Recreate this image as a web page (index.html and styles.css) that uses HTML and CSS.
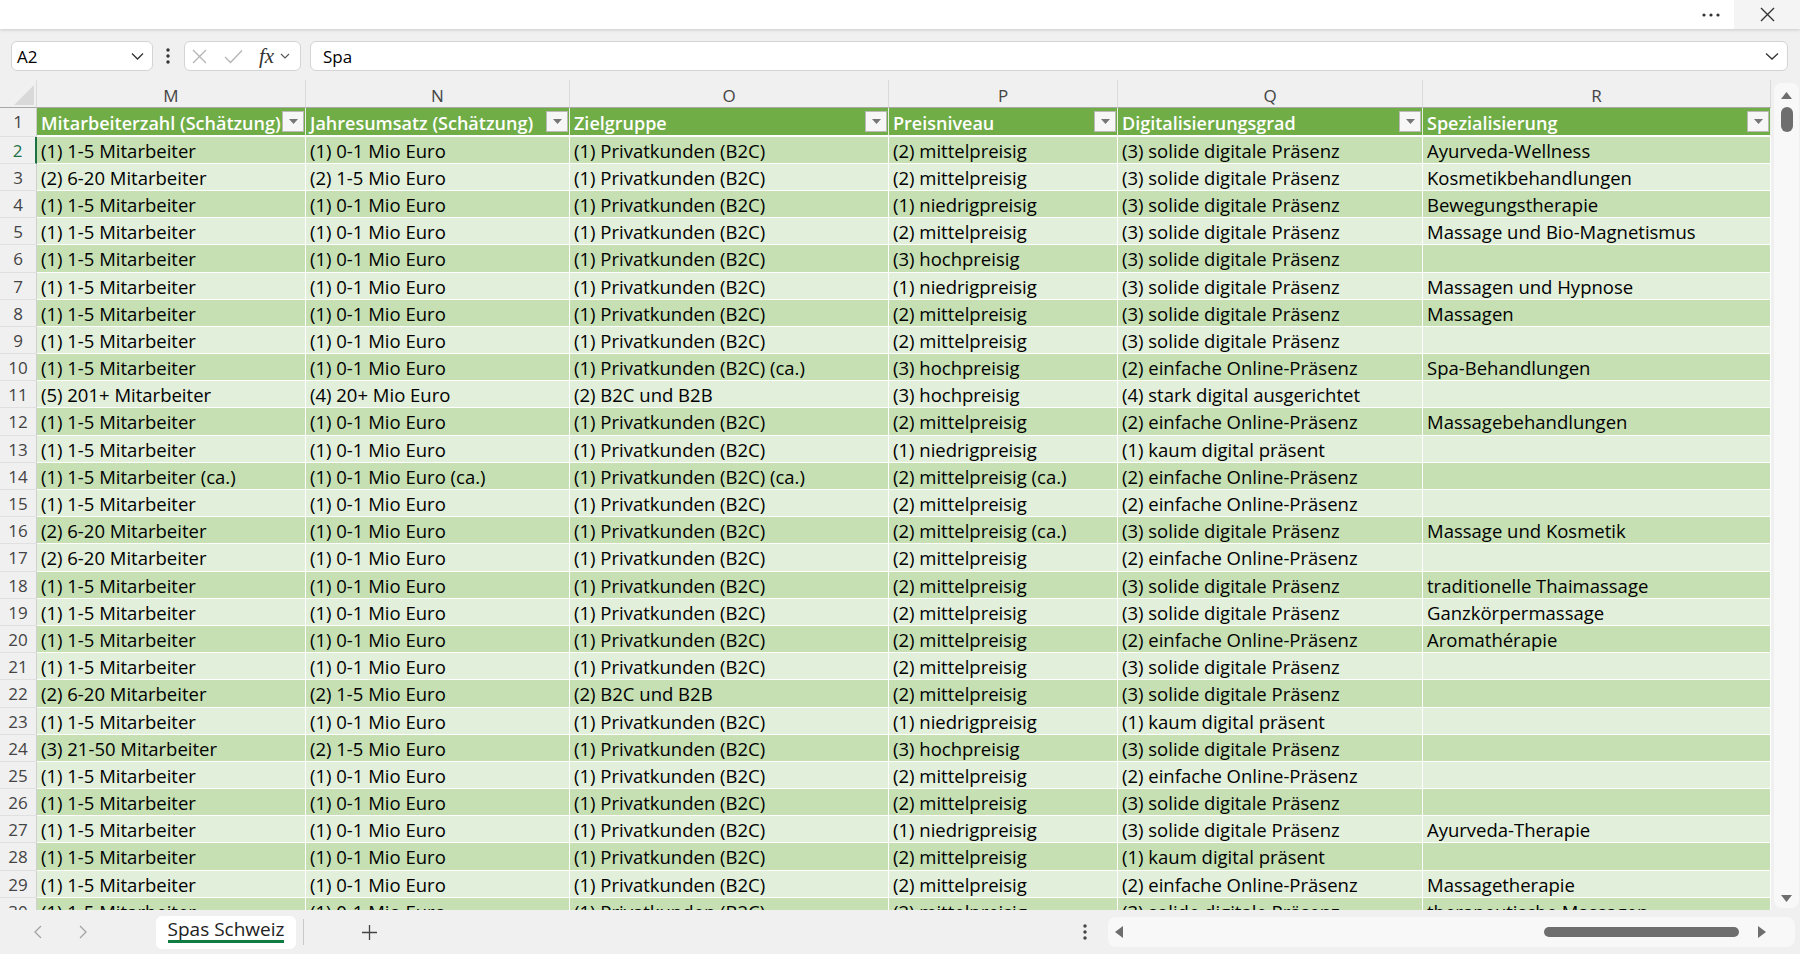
FILE: index.html
```html
<!DOCTYPE html>
<html lang="de">
<head>
    <meta charset="UTF-8">
    <meta name="viewport" content="width=device-width, initial-scale=1.0">
    <title>Spas Schweiz</title>
    <link rel="stylesheet" href="styles.css">
</head>
<body>
    <div class="titlebar">
        <div class="title-more">
            <svg width="18" height="4" viewBox="0 0 18 4"><circle cx="2" cy="2" r="1.6" fill="#333"/><circle cx="9" cy="2" r="1.6" fill="#333"/><circle cx="16" cy="2" r="1.6" fill="#333"/></svg>
        </div>
        <div class="title-close">
            <svg width="15" height="15" viewBox="0 0 15 15"><path d="M1 1l13 13M14 1L1 14" stroke="#333" stroke-width="1.4" fill="none"/></svg>
        </div>
    </div>

    <div class="formula-bar">
        <div class="name-box">
            <span>A2</span>
            <svg width="13" height="8" viewBox="0 0 13 8"><path d="M1 1.5l5.5 5.5 5.5-5.5" stroke="#333" stroke-width="1.3" fill="none"/></svg>
        </div>
        <div class="fb-sep">
            <svg width="4" height="16" viewBox="0 0 4 16"><circle cx="2" cy="2" r="1.7" fill="#333"/><circle cx="2" cy="8" r="1.7" fill="#333"/><circle cx="2" cy="14" r="1.7" fill="#333"/></svg>
        </div>
        <div class="fx-box">
            <svg class="fx-cancel" width="15" height="15" viewBox="0 0 15 15"><path d="M1 1l13 13M14 1L1 14" stroke="#b4b4b4" stroke-width="1.3" fill="none"/></svg>
            <svg class="fx-enter" width="19" height="15" viewBox="0 0 19 15"><path d="M1 8l5.5 5.5L18 1.5" stroke="#b4b4b4" stroke-width="1.3" fill="none"/></svg>
            <span class="fx-label">fx</span>
            <svg class="fx-more" width="10" height="6" viewBox="0 0 10 6"><path d="M1 1l4 4 4-4" stroke="#555" stroke-width="1.1" fill="none"/></svg>
        </div>
        <div class="formula-input">
            <span>Spa</span>
            <svg width="14" height="8" viewBox="0 0 14 8"><path d="M1 1.5l6 5.5 6-5.5" stroke="#333" stroke-width="1.3" fill="none"/></svg>
        </div>
    </div>

    <div class="sheet">
        <div class="grid" id="grid">
            <div class="corner">
                <svg width="20" height="20" viewBox="0 0 20 20"><path d="M20 0V20H0Z" fill="#d9d9d9"/></svg>
            </div>
            <div class="col-head">M</div>
            <div class="col-head">N</div>
            <div class="col-head">O</div>
            <div class="col-head">P</div>
            <div class="col-head">Q</div>
            <div class="col-head">R</div>

            <div class="row-head">1</div>
            <div class="hcell"><span class="htext">Mitarbeiterzahl (Schätzung)</span><span class="filter"><svg width="9" height="5" viewBox="0 0 9 5"><path d="M0 0h9L4.5 5z" fill="#767676"/></svg></span></div>
            <div class="hcell"><span class="htext">Jahresumsatz (Schätzung)</span><span class="filter"><svg width="9" height="5" viewBox="0 0 9 5"><path d="M0 0h9L4.5 5z" fill="#767676"/></svg></span></div>
            <div class="hcell"><span class="htext">Zielgruppe</span><span class="filter"><svg width="9" height="5" viewBox="0 0 9 5"><path d="M0 0h9L4.5 5z" fill="#767676"/></svg></span></div>
            <div class="hcell"><span class="htext">Preisniveau</span><span class="filter"><svg width="9" height="5" viewBox="0 0 9 5"><path d="M0 0h9L4.5 5z" fill="#767676"/></svg></span></div>
            <div class="hcell"><span class="htext">Digitalisierungsgrad</span><span class="filter"><svg width="9" height="5" viewBox="0 0 9 5"><path d="M0 0h9L4.5 5z" fill="#767676"/></svg></span></div>
            <div class="hcell"><span class="htext">Spezialisierung</span><span class="filter"><svg width="9" height="5" viewBox="0 0 9 5"><path d="M0 0h9L4.5 5z" fill="#767676"/></svg></span></div>
        </div>

        <div class="vscroll">
            <div class="vtrack">
                <svg class="arrow-up" width="11" height="7" viewBox="0 0 11 7"><path d="M0 7L5.5 0 11 7z" fill="#6e6e6e"/></svg>
                <div class="vthumb"></div>
                <div class="vspace"></div>
                <svg class="arrow-down" width="11" height="7" viewBox="0 0 11 7"><path d="M0 0h11L5.5 7z" fill="#6e6e6e"/></svg>
            </div>
        </div>
    </div>

    <div class="tabbar">
        <div class="tab-nav">
            <svg width="8" height="14" viewBox="0 0 8 14"><path d="M7 1L1 7l6 6" stroke="#a3a3a3" stroke-width="1.3" fill="none"/></svg>
        </div>
        <div class="tab-nav">
            <svg width="8" height="14" viewBox="0 0 8 14"><path d="M1 1l6 6-6 6" stroke="#a3a3a3" stroke-width="1.3" fill="none"/></svg>
        </div>
        <div class="tab"><span class="tab-label">Spas Schweiz</span></div>
        <div class="tab-sep"></div>
        <div class="tab-add">
            <svg width="17" height="17" viewBox="0 0 17 17"><path d="M8.5 1v15M1 8.5h15" stroke="#444" stroke-width="1.3" fill="none"/></svg>
        </div>
        <div class="tab-space"></div>
        <div class="tab-more">
            <svg width="4" height="16" viewBox="0 0 4 16"><circle cx="2" cy="2" r="1.7" fill="#444"/><circle cx="2" cy="8" r="1.7" fill="#444"/><circle cx="2" cy="14" r="1.7" fill="#444"/></svg>
        </div>
        <div class="hscroll">
            <svg width="8" height="12" viewBox="0 0 8 12"><path d="M8 0v12L0 6z" fill="#6e6e6e"/></svg>
            <div class="hlane"><div class="hthumb"></div></div>
            <svg width="8" height="12" viewBox="0 0 8 12"><path d="M0 0v12l8-6z" fill="#6e6e6e"/></svg>
        </div>
    </div>

    <script>
        const MA = '(1) 1-5 Mitarbeiter';
        const MB = '(2) 6-20 Mitarbeiter';
        const UA = '(1) 0-1 Mio Euro';
        const UB = '(2) 1-5 Mio Euro';
        const PK = '(1) Privatkunden (B2C)';
        const BB = '(2) B2C und B2B';
        const NP = '(1) niedrigpreisig';
        const MP = '(2) mittelpreisig';
        const HP = '(3) hochpreisig';
        const KD = '(1) kaum digital präsent';
        const EO = '(2) einfache Online-Präsenz';
        const SD = '(3) solide digitale Präsenz';

        // rows 2..30 of the table, columns M..R
        const rows = [
            [MA, UA, PK, MP, SD, 'Ayurveda-Wellness'],
            [MB, UB, PK, MP, SD, 'Kosmetikbehandlungen'],
            [MA, UA, PK, NP, SD, 'Bewegungstherapie'],
            [MA, UA, PK, MP, SD, 'Massage und Bio-Magnetismus'],
            [MA, UA, PK, HP, SD, ''],
            [MA, UA, PK, NP, SD, 'Massagen und Hypnose'],
            [MA, UA, PK, MP, SD, 'Massagen'],
            [MA, UA, PK, MP, SD, ''],
            [MA, UA, '(1) Privatkunden (B2C) (ca.)', HP, EO, 'Spa-Behandlungen'],
            ['(5) 201+ Mitarbeiter', '(4) 20+ Mio Euro', BB, HP, '(4) stark digital ausgerichtet', ''],
            [MA, UA, PK, MP, EO, 'Massagebehandlungen'],
            [MA, UA, PK, NP, KD, ''],
            ['(1) 1-5 Mitarbeiter (ca.)', '(1) 0-1 Mio Euro (ca.)', '(1) Privatkunden (B2C) (ca.)', '(2) mittelpreisig (ca.)', EO, ''],
            [MA, UA, PK, MP, EO, ''],
            [MB, UA, PK, '(2) mittelpreisig (ca.)', SD, 'Massage und Kosmetik'],
            [MB, UA, PK, MP, EO, ''],
            [MA, UA, PK, MP, SD, 'traditionelle Thaimassage'],
            [MA, UA, PK, MP, SD, 'Ganzkörpermassage'],
            [MA, UA, PK, MP, EO, 'Aromathérapie'],
            [MA, UA, PK, MP, SD, ''],
            [MB, UB, BB, MP, SD, ''],
            [MA, UA, PK, NP, KD, ''],
            ['(3) 21-50 Mitarbeiter', UB, PK, HP, SD, ''],
            [MA, UA, PK, MP, EO, ''],
            [MA, UA, PK, MP, SD, ''],
            [MA, UA, PK, NP, SD, 'Ayurveda-Therapie'],
            [MA, UA, PK, MP, KD, ''],
            [MA, UA, PK, MP, EO, 'Massagetherapie'],
            [MA, UA, PK, MP, SD, 'therapeutische Massagen']
        ];

        const grid = document.getElementById('grid');
        rows.forEach((row, i) => {
            const n = i + 2;
            const head = document.createElement('div');
            head.className = n === 2 ? 'row-head active' : 'row-head';
            head.textContent = n;
            grid.appendChild(head);
            row.forEach(value => {
                const cell = document.createElement('div');
                cell.className = 'cell ' + (n % 2 === 0 ? 'dark' : 'light');
                cell.textContent = value;
                grid.appendChild(cell);
            });
        });
    </script>
</body>
</html>
```

FILE: styles.css
```css
* {
    box-sizing: border-box;
}
html, body {
    margin: 0;
}
body {
    width: 1800px;
    height: 954px;
    overflow: hidden;
    display: flex;
    flex-direction: column;
    font-family: 'Open Sans', 'Noto Sans', sans-serif;
    background-color: #f0f0f0;
    color: #000;
}

/* window title bar */
.titlebar {
    flex-shrink: 0;
    height: 29px;
    display: flex;
    justify-content: flex-end;
    background-color: #fff;
    box-shadow: 0 1px 3px rgba(0, 0, 0, 0.16);
    position: relative;
    z-index: 1;
}
.title-more {
    width: 46px;
    display: flex;
    align-items: center;
    justify-content: center;
}
.title-close {
    width: 66px;
    display: flex;
    align-items: center;
    justify-content: center;
    background-color: #f4f4f4;
}

/* name box + formula bar */
.formula-bar {
    flex-shrink: 0;
    height: 51px;
    display: flex;
    align-items: flex-start;
    padding: 12px 12px 0 11px;
}
.name-box,
.fx-box,
.formula-input {
    height: 30px;
    display: flex;
    align-items: center;
    background-color: #fff;
    border: 1px solid #d4d4d4;
    border-radius: 6px;
    font-size: 17px;
}
.name-box {
    width: 142px;
    justify-content: space-between;
    padding: 0 8px 0 5px;
}
.fb-sep {
    width: 8px;
    height: 30px;
    margin: 0 12px 0 11px;
    display: flex;
    align-items: center;
    justify-content: center;
}
.fx-box {
    width: 117px;
}
.fx-cancel {
    margin-left: 7px;
}
.fx-enter {
    margin-left: 17px;
}
.fx-label {
    margin-left: 16px;
    font-family: 'Liberation Serif', 'DejaVu Serif', serif;
    font-style: italic;
    font-size: 21px;
    color: #333;
    line-height: 1;
}
.fx-more {
    margin-left: 6px;
}
.formula-input {
    flex: 1;
    margin-left: 9px;
    justify-content: space-between;
    padding: 0 8px 0 12px;
}

/* grid */
.sheet {
    flex-shrink: 0;
    height: 830px;
    display: flex;
}
.grid {
    width: 1771px;
    height: 830px;
    overflow: hidden;
    display: grid;
    grid-template-columns: 37px 269px 264px 319px 229px 305px 348px;
    grid-template-rows: 28px 28.6px;
    grid-auto-rows: 27.2px;
    align-content: start;
}
.corner {
    display: flex;
    justify-content: flex-end;
    align-items: flex-end;
    padding: 0 2px 2px 0;
    background-color: #f0f0f0;
    border-right: 1px solid #dadada;
    border-bottom: 1px solid #a8a8a8;
}
.col-head {
    background-color: #f0f0f0;
    border-right: 1px solid #dadada;
    border-bottom: 1px solid #a8a8a8;
    text-align: center;
    font-size: 17px;
    line-height: 25px;
    padding-top: 3px;
    color: #444;
}
.row-head {
    background-color: #f0f0f0;
    border-right: 1px solid #cfcfcf;
    border-bottom: 1px solid #e0e0e0;
    text-align: center;
    font-size: 17px;
    line-height: 26px;
    padding-top: 1px;
    color: #444;
}
.row-head.active {
    color: #1e7145;
    border-right: 2px solid #1e7145;
}
.hcell {
    display: flex;
    align-items: center;
    justify-content: space-between;
    padding: 0 1px 0 4px;
    background-color: #70ad47;
    border-right: 1px solid #e9f2e2;
    border-bottom: 2px solid #fff;
    color: #fff;
    font-weight: 600;
    font-size: 18px;
    line-height: 27px;
    white-space: nowrap;
    overflow: hidden;
}
.htext {
    margin-top: 4px;
}
.filter {
    flex-shrink: 0;
    width: 22px;
    height: 21px;
    display: flex;
    align-items: center;
    justify-content: center;
    background-color: #f6f6f6;
    border: 1px solid #b9b9b9;
}
.cell {
    padding-left: 4px;
    border-right: 1px solid #fff;
    border-bottom: 1px solid #fff;
    font-size: 18.5px;
    line-height: 27px;
    white-space: nowrap;
    overflow: hidden;
}
.dark {
    background-color: #c6e0b4;
}
.light {
    background-color: #e2efda;
}

/* vertical scrollbar */
.vscroll {
    width: 29px;
    padding: 3px 1px 2px 3px;
}
.vtrack {
    height: 100%;
    display: flex;
    flex-direction: column;
    align-items: center;
    padding: 9px 0 6px;
    background-color: #f8f8f8;
    border-radius: 8px;
}
.vthumb {
    width: 12px;
    height: 25px;
    margin-top: 8px;
    border-radius: 6px;
    background-color: #6e6e6e;
}
.vspace {
    flex: 1;
}

/* sheet tabs + horizontal scrollbar */
.tabbar {
    flex-shrink: 0;
    height: 44px;
    display: flex;
    align-items: center;
    padding-left: 23px;
}
.tab-nav {
    width: 30px;
    display: flex;
    justify-content: center;
}
.tab-nav + .tab-nav {
    margin-left: 15px;
}
.tab {
    width: 140px;
    height: 33px;
    margin-left: 58px;
    display: flex;
    align-items: center;
    justify-content: center;
    padding-bottom: 3px;
    background-color: #fff;
    border-radius: 6px;
}
.tab-label {
    font-size: 19px;
    line-height: 22px;
    color: #222;
    border-bottom: 3px solid #107c41;
}
.tab-sep {
    width: 1px;
    height: 26px;
    margin-left: 7px;
    background-color: #c8c8c8;
}
.tab-add {
    width: 30px;
    margin-left: 50px;
    display: flex;
    justify-content: center;
}
.tab-space {
    flex: 1;
}
.tab-more {
    width: 10px;
    margin-right: 18px;
    display: flex;
    justify-content: center;
}
.hscroll {
    width: 687px;
    height: 30px;
    margin-right: 5px;
    display: flex;
    align-items: center;
    padding: 0 29px 0 7px;
    background-color: #f8f8f8;
    border-radius: 8px;
}
.hlane {
    flex: 1;
    display: flex;
    justify-content: flex-end;
}
.hthumb {
    width: 195px;
    height: 10px;
    margin-right: 19px;
    border-radius: 5px;
    background-color: #6e6e6e;
}
```
